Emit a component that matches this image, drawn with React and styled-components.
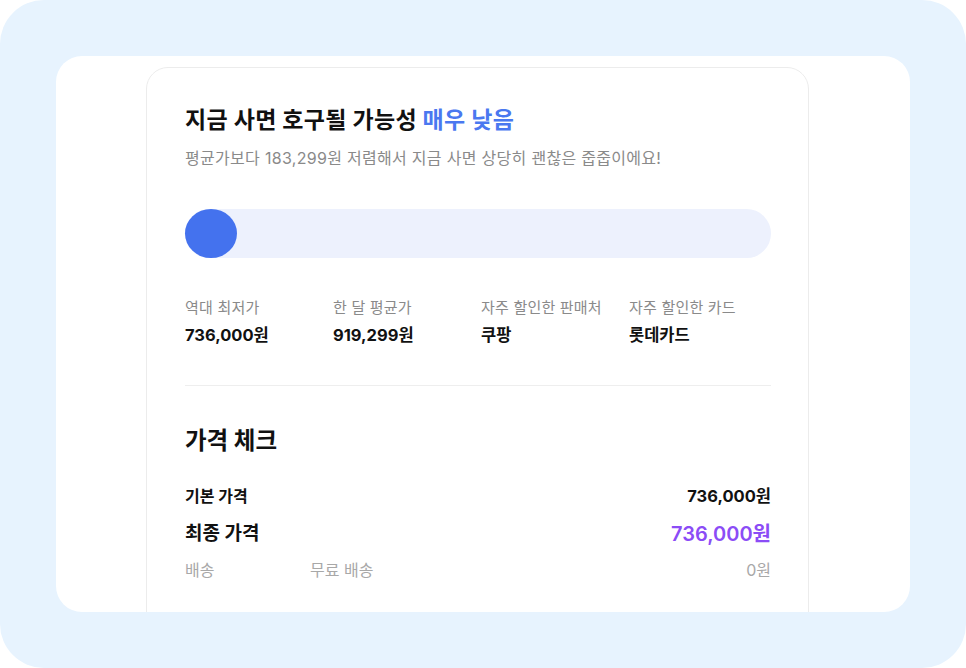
import styled, { createGlobalStyle } from 'styled-components';

const GlobalStyle = createGlobalStyle`
  html, body {
    margin: 0;
    padding: 0;
    background: #fff;
  }
  body {
    font-family: Inter, "Noto Sans CJK KR", sans-serif;
    -webkit-font-smoothing: antialiased;
  }
`;

const stats = [
  { label: '역대 최저가', value: '736,000원' },
  { label: '한 달 평균가', value: '919,299원' },
  { label: '자주 할인한 판매처', value: '쿠팡' },
  { label: '자주 할인한 카드', value: '롯데카드' },
];

const App = () => {
  return (
    <>
      <GlobalStyle />
      <Backdrop>
        <Panel>
          <Card>
            <Title>
              지금 사면 호구될 가능성 <Accent>매우 낮음</Accent>
            </Title>
            <Subtitle>
              평균가보다 183,299원 저렴해서 지금 사면 상당히 괜찮은 줍줍이에요!
            </Subtitle>

            <Track>
              <Knob />
            </Track>

            <Stats>
              {stats.map((s) => (
                <Stat key={s.label}>
                  <StatLabel>{s.label}</StatLabel>
                  <StatValue>{s.value}</StatValue>
                </Stat>
              ))}
            </Stats>

            <Divider />

            <SectionTitle>가격 체크</SectionTitle>
            <PriceRow>
              <RowLabel>기본 가격</RowLabel>
              <RowValue>736,000원</RowValue>
            </PriceRow>
            <PriceRow $big>
              <RowLabel $big>최종 가격</RowLabel>
              <RowValue $big>736,000원</RowValue>
            </PriceRow>
            <PriceRow $muted>
              <Shipping>
                <span>배송</span>
                <span>무료 배송</span>
              </Shipping>
              <span>0원</span>
            </PriceRow>
          </Card>
        </Panel>
      </Backdrop>
    </>
  );
};

const Backdrop = styled.div`
  width: 966px;
  height: 668px;
  box-sizing: border-box;
  padding: 56px;
  background: #e7f3fe;
  border-radius: 44px;
`;

const Panel = styled.div`
  height: 100%;
  box-sizing: border-box;
  background: #fff;
  border-radius: 26px;
  overflow: hidden;
  padding: 11px 101px 0 90px;
`;

const Card = styled.div`
  height: 620px;
  box-sizing: border-box;
  border: 1px solid #ececec;
  border-radius: 22px;
  padding: 37px 37px 0 38px;
`;

const Title = styled.h1`
  margin: 0;
  font-size: 23px;
  line-height: 30px;
  font-weight: 700;
  color: #111;
  letter-spacing: 0.3px;
`;

const Accent = styled.span`
  color: #4a78f0;
`;

const Subtitle = styled.p`
  margin: 12px 0 0;
  font-size: 16px;
  line-height: 22px;
  color: #8a8a8a;
  letter-spacing: 0.3px;
`;

const Track = styled.div`
  margin-top: 40px;
  height: 49px;
  border-radius: 25px;
  background: #edf1fd;
  display: flex;
  align-items: center;
`;

const Knob = styled.div`
  width: 52px;
  height: 49px;
  border-radius: 50%;
  background: #4472ee;
`;

const Stats = styled.div`
  margin-top: 40px;
  display: grid;
  grid-template-columns: repeat(4, 148px);
`;

const Stat = styled.div`
  display: flex;
  flex-direction: column;
  gap: 6px;
`;

const StatLabel = styled.span`
  font-size: 15px;
  line-height: 20px;
  color: #8a8a8a;
  letter-spacing: 0.2px;
`;

const StatValue = styled.span`
  font-size: 16.5px;
  line-height: 22px;
  font-weight: 700;
  color: #111;
`;

const Divider = styled.hr`
  margin: 39px 0 0;
  border: none;
  border-top: 1px solid #eeeeee;
`;

const SectionTitle = styled.h2`
  margin: 40px 0 0;
  font-size: 23.5px;
  line-height: 30px;
  font-weight: 700;
  color: #111;
`;

const PriceRow = styled.div`
  display: flex;
  justify-content: space-between;
  align-items: center;
  margin-top: ${(p) => (p.$big ? '14px' : p.$muted ? '12px' : '29px')};
  font-size: 16px;
  line-height: ${(p) => (p.$big ? '26px' : '22px')};
  color: ${(p) => (p.$muted ? '#a8a8a8' : '#111')};
`;

const RowLabel = styled.span`
  font-size: ${(p) => (p.$big ? '19px' : '16px')};
  font-weight: 700;
`;

const RowValue = styled.span`
  font-size: ${(p) => (p.$big ? '20px' : '16.5px')};
  font-weight: ${(p) => (p.$big ? 600 : 700)};
  color: ${(p) => (p.$big ? '#8b4cf6' : '#111')};
`;

const Shipping = styled.div`
  display: grid;
  grid-template-columns: 125px auto;
`;

export default App;
